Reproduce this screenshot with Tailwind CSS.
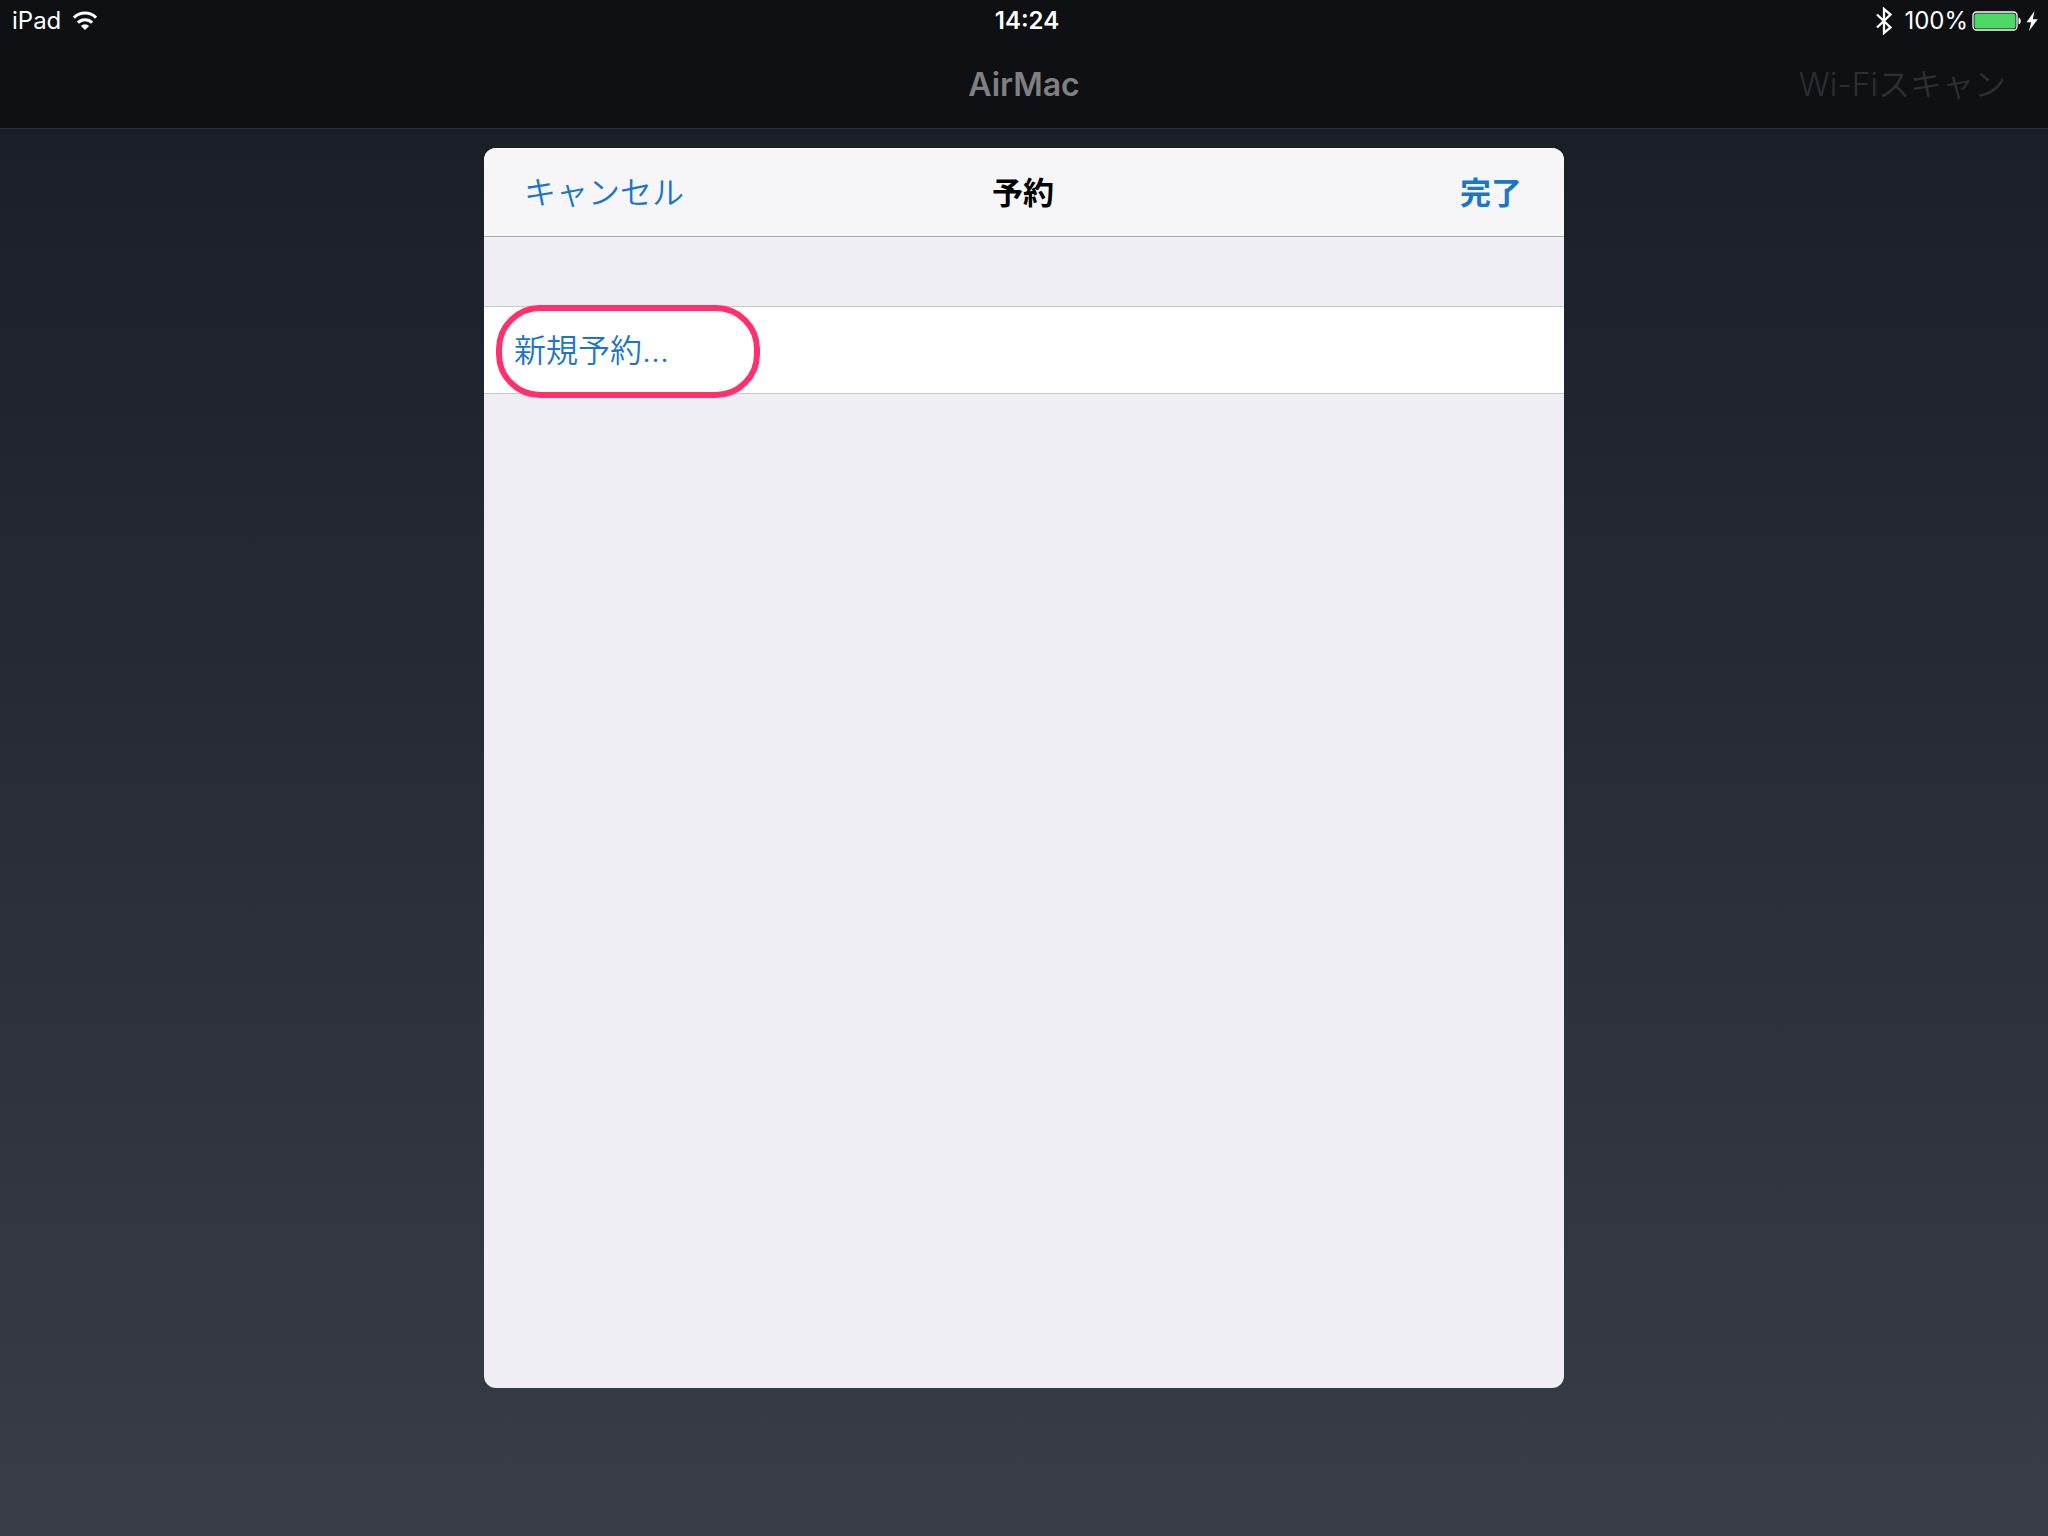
<!DOCTYPE html>
<html lang="ja">
<head>
<meta charset="utf-8">
<meta name="viewport" content="width=device-width, initial-scale=1">
<title>AirMac</title>
<script src="https://cdn.jsdelivr.net/npm/@tailwindcss/browser@4"></script>
</head>
<body class="flex min-h-screen flex-col bg-linear-to-b from-[#181c25] to-[#383d46] font-['Inter','Noto_Sans_CJK_JP',sans-serif]">
  <header class="border-b border-[#2a2f38] bg-[#0f1013]">
    <div class="grid h-10 grid-cols-3 items-center pt-[2px] pr-[10px] pl-3 text-2xl text-white">
      <div class="flex items-center gap-3">
        <span>iPad</span>
        <svg class="h-5 w-6" viewBox="0 0 24 20" fill="none" stroke="#fff" aria-label="Wi-Fi">
          <path d="M.9 6.700a15.700 15.700 0 0 1 22.200 0" stroke-width="3"/>
          <path d="M4.900 11.600a10 10 0 0 1 14.200 0" stroke-width="3"/>
          <path d="M12 19 7.900 14.900a5.800 5.800 0 0 1 8.200 0z" fill="#fff" stroke="none"/>
        </svg>
      </div>
      <time class="pl-1 text-center font-semibold">14:24</time>
      <div class="flex items-center justify-end">
        <svg class="mr-[10px] h-7 w-5" viewBox="0 0 20 28" fill="none" stroke="#fff" stroke-width="2.300" aria-label="Bluetooth">
          <path d="M3 7.500 16.500 20.500 10 26V2l6.500 5.500L3 20.500"/>
        </svg>
        <span class="mr-1">100%</span>
        <svg class="h-5 w-[50px]" viewBox="0 0 50 20" aria-label="バッテリー">
          <rect x="1" y="1" width="44" height="18" rx="3.500" fill="none" stroke="#fff" stroke-width="1.300"/>
          <rect x="2.500" y="2.500" width="41" height="15" rx="2" fill="#4cd964"/>
          <path d="M46.500 6.500c3 .6 3 6.400 0 7z" fill="#fff"/>
        </svg>
        <svg class="ml-1 h-5 w-3" viewBox="0 0 12 20" fill="#fff" aria-label="充電中">
          <path d="M8.500 0 .5 11.300h4.700L3 20l8.700-11.800H6.800z"/>
        </svg>
      </div>
    </div>
    <div class="grid h-22 grid-cols-3 items-center px-[42px] pt-[2px] text-[32px] leading-10">
      <h1 class="col-start-2 text-center font-semibold text-[#7f8083]">AirMac</h1>
      <button class="justify-self-end font-[350] text-[#2e2f32]" disabled>Wi-Fiスキャン</button>
    </div>
  </header>

  <main class="flex flex-1 flex-col items-center pt-[19px] pb-[148px]">
    <section class="flex w-full max-w-[1080px] flex-1 flex-col overflow-hidden rounded-xl bg-[#efeef4] text-[32px] leading-10" role="dialog" aria-labelledby="title">
      <div class="grid h-[89px] grid-cols-3 items-center border-b border-[#a9a9b0] bg-[#f6f6f8] pt-[2px] pr-[42px] pl-10">
        <button class="justify-self-start font-[350] text-[#1b75cb]">キャンセル</button>
        <h2 id="title" class="text-center text-[31px] font-bold text-black">予約</h2>
        <button class="justify-self-end text-[31px] font-bold text-[#1b75cb]">完了</button>
      </div>
      <div class="relative mt-[69px] flex h-[88px] border-y border-[#c8c7cc] bg-white">
        <button class="flex-1 pt-[2px] pl-[30px] text-left font-[350] text-[#1b75cb]">新規予約...</button>
        <span class="pointer-events-none absolute -top-[2px] left-3 h-[93px] w-[264px] rounded-[44px] border-6 border-[#ff306c]"></span>
      </div>
    </section>
  </main>
</body>
</html>
